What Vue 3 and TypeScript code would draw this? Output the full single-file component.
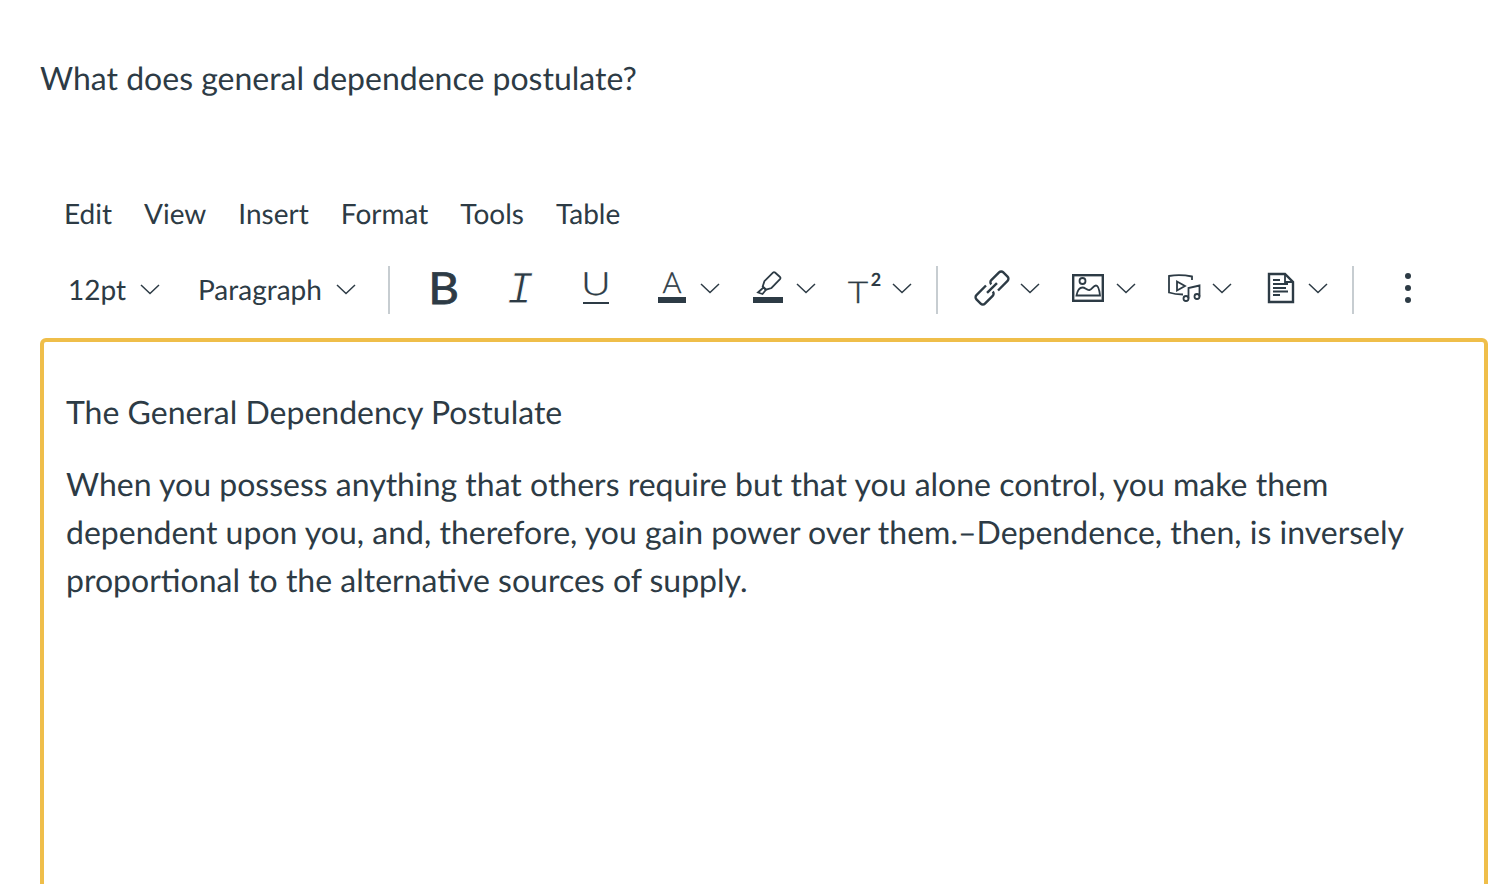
<script setup lang="ts">
const menus: string[] = ['Edit', 'View', 'Insert', 'Format', 'Tools', 'Table']
</script>

<template>
  <div class="page">
    <div class="question">What does general dependence postulate?</div>

    <div class="menubar">
      <span v-for="m in menus" :key="m">{{ m }}</span>
    </div>

    <div class="toolbar">
      <div class="select select-size">
        <span>12pt</span>
        <svg class="caret" width="20" height="10" viewBox="0 0 20 10"><path d="M1 1L10 9.5L19 1" /></svg>
      </div>
      <div class="select select-block">
        <span>Paragraph</span>
        <svg class="caret" width="20" height="10" viewBox="0 0 20 10"><path d="M1 1L10 9.5L19 1" /></svg>
      </div>
      <i class="sep sep-one"></i>

      <div class="btn">
        <svg width="36" height="36" viewBox="0 0 36 36"><text transform="translate(17.5 34) scale(1.08 1)" text-anchor="middle" class="g-b">B</text></svg>
      </div>
      <div class="btn">
        <svg width="36" height="36" viewBox="0 0 36 36"><text x="18" y="33" text-anchor="middle" class="g-i">I</text></svg>
      </div>
      <div class="btn">
        <svg width="36" height="36" viewBox="0 0 36 36">
          <text transform="translate(18 25) scale(1.28 1)" text-anchor="middle" class="g-u">U</text>
          <rect x="5" y="32" width="26" height="2" class="fill" />
        </svg>
      </div>

      <div class="split split-first">
        <div class="cell">
          <svg width="36" height="36" viewBox="0 0 36 36">
            <text x="18" y="23" text-anchor="middle" class="g-a">A</text>
            <rect x="4" y="27" width="28" height="6" class="fill" />
          </svg>
        </div>
        <svg class="caret" width="20" height="10" viewBox="0 0 20 10"><path d="M1 1L10 9.5L19 1" /></svg>
      </div>
      <div class="split">
        <div class="cell">
          <svg width="36" height="36" viewBox="0 0 36 36">
            <g transform="translate(3 2)" class="line">
              <path d="M22 0.5L27 5C27.6 5.7 27.6 6.5 27 7.2L18.5 16L13 17.7L9.7 14.5L11.4 9.2L20 0.6C20.6 0 21.4 0 22 0.5Z" />
              <path d="M10.5 15.5L5 20.5L9.5 22L13 17.7Z" />
            </g>
            <rect x="3" y="27" width="30" height="6" class="fill" />
          </svg>
        </div>
        <svg class="caret" width="20" height="10" viewBox="0 0 20 10"><path d="M1 1L10 9.5L19 1" /></svg>
      </div>
      <div class="split">
        <div class="cell">
          <svg width="36" height="36" viewBox="0 0 36 36">
            <text transform="translate(12 33) scale(1.18 1)" text-anchor="middle" class="g-t">T</text>
            <text x="30" y="16" text-anchor="middle" class="g-two">2</text>
          </svg>
        </div>
        <svg class="caret" width="20" height="10" viewBox="0 0 20 10"><path d="M1 1L10 9.5L19 1" /></svg>
      </div>
      <i class="sep"></i>

      <div class="split split-insert">
        <div class="cell">
          <svg width="36" height="36" viewBox="0 0 36 36">
            <g transform="translate(18 18) rotate(-45)" class="line thick">
              <path d="M-2.5 -6H-16a3 3 0 0 0 -3 3V3a3 3 0 0 0 3 3H-5a3 3 0 0 0 3 -3" />
              <path d="M2.5 6H16a3 3 0 0 0 3 -3V-3a3 3 0 0 0 -3 -3H5a3 3 0 0 0 -3 3" />
              <path d="M-7 0H7" />
            </g>
          </svg>
        </div>
        <svg class="caret" width="20" height="10" viewBox="0 0 20 10"><path d="M1 1L10 9.5L19 1" /></svg>
      </div>
      <div class="split">
        <div class="cell">
          <svg width="36" height="36" viewBox="0 0 36 36">
            <g transform="translate(2 4)" class="line">
              <rect x="1.2" y="1.2" width="29.6" height="25.6" class="thick" />
              <circle cx="10.5" cy="7" r="3" />
              <path d="M4.5 21.5C5.5 16 7.5 13.5 10.5 13.5C13.5 13.5 14.5 16.5 17.5 16C20.5 15.5 21 11.5 24 11.5C26.5 11.5 27.5 17 28 21.5Z" />
            </g>
          </svg>
        </div>
        <svg class="caret" width="20" height="10" viewBox="0 0 20 10"><path d="M1 1L10 9.5L19 1" /></svg>
      </div>
      <div class="split">
        <div class="cell">
          <svg width="36" height="36" viewBox="0 0 36 36">
            <g transform="translate(0 3)" class="line">
              <path d="M26 7V3.5Q14 1 3 3V19.5Q9 21.5 17 21.5" />
              <path d="M11 8.5L19 13L11 17.5Z" />
              <circle cx="20" cy="25.5" r="2.5" />
              <circle cx="31" cy="23.5" r="2.5" />
              <path d="M22.5 25.5V15L33.5 12.5V23.5" />
            </g>
          </svg>
        </div>
        <svg class="caret" width="20" height="10" viewBox="0 0 20 10"><path d="M1 1L10 9.5L19 1" /></svg>
      </div>
      <div class="split">
        <div class="cell">
          <svg width="36" height="36" viewBox="0 0 36 36">
            <g transform="translate(5 2)" class="line">
              <path d="M2 2H18L26 10V30H2Z" class="thick" />
              <path d="M18 2V10H26" />
              <path d="M6 8H13M6 12H21M6 16H19M6 19.5H21M6 23H13" />
            </g>
          </svg>
        </div>
        <svg class="caret" width="20" height="10" viewBox="0 0 20 10"><path d="M1 1L10 9.5L19 1" /></svg>
      </div>
      <i class="sep"></i>

      <div class="btn btn-more">
        <svg width="36" height="36" viewBox="0 0 36 36">
          <circle cx="18" cy="6" r="3" class="fill" />
          <circle cx="18" cy="18" r="3" class="fill" />
          <circle cx="18" cy="30" r="3" class="fill" />
        </svg>
      </div>
    </div>

    <div class="editor">
      <p>The General Dependency Postulate</p>
      <p>When you possess anything that others require but that you alone control, you make them dependent upon you, and, therefore, you gain power over them.–Dependence, then, is inversely proportional to the alternative sources of supply.</p>
    </div>
  </div>
</template>

<style scoped>
.page {
  height: 884px;
  overflow: hidden;
  box-sizing: border-box;
  padding: 54px 20px 0 40px;
  background: #fff;
  color: #2d3b45;
  font-family: Lato, "Open Sans", sans-serif;
  text-rendering: geometricPrecision;
}
.question {
  font-size: 32px;
  line-height: 48px;
}
.menubar {
  display: flex;
  gap: 32px;
  margin-top: 91px;
  padding-left: 24px;
  font-size: 28px;
  line-height: 40px;
}
.toolbar {
  display: flex;
  align-items: center;
  height: 48px;
  margin-top: 33px;
  padding-left: 28px;
}
.select {
  display: flex;
  align-items: center;
  gap: 14px;
  font-size: 28px;
  line-height: 46px;
}
.select .caret {
  margin-bottom: 2px;
}
.select > span {
  margin-bottom: 2px;
}
.select-size {
  width: 130px;
}
.select-block {
  width: 190px;
}
.sep {
  flex: none;
  width: 2px;
  height: 48px;
  background: #c7cdd1;
}
.sep-one {
  margin-right: 16px;
}
.btn {
  flex: none;
  display: flex;
  justify-content: center;
  width: 76px;
  height: 36px;
  margin-bottom: 4px;
}
.btn-more {
  margin-left: 16px;
}
.split {
  flex: none;
  display: flex;
  align-items: center;
  width: 96px;
  height: 36px;
  margin-bottom: 4px;
}
.split-first {
  margin-left: 14px;
}
.split-insert {
  margin-left: 30px;
}
.cell {
  display: flex;
  justify-content: center;
  width: 48px;
  height: 36px;
  margin-right: 4px;
}
svg {
  display: block;
  overflow: visible;
}
.caret path {
  fill: none;
  stroke: #2d3b45;
  stroke-width: 1.5;
}
.fill {
  fill: #2d3b45;
}
.line,
.line * {
  fill: none;
  stroke: #2d3b45;
  stroke-width: 1.8;
}
.line .thick,
.line.thick * {
  stroke-width: 2.4;
}
text {
  fill: #2d3b45;
  font-family: Lato, sans-serif;
}
.g-b {
  font-size: 44px;
  font-weight: 400;
  stroke: #2d3b45;
  stroke-width: 0.8;
}
.g-i {
  font-family: "Liberation Mono", monospace;
  font-style: italic;
  font-size: 46px;
  stroke: #fff;
  stroke-width: 1;
}
.g-u {
  font-size: 32px;
  font-weight: 300;
  stroke: #2d3b45;
  stroke-width: 0.3;
}
.g-a {
  font-size: 29px;
  font-weight: 300;
  stroke: #2d3b45;
  stroke-width: 0.4;
}
.g-t {
  font-size: 30px;
  font-weight: 300;
  stroke: #2d3b45;
  stroke-width: 0.3;
}
.g-two {
  font-size: 18px;
  font-weight: 700;
}
.editor {
  box-sizing: border-box;
  height: 640px;
  margin-top: 24px;
  padding: 46px 22px 0;
  border: 4px solid #efbe4a;
  border-radius: 6px;
  font-size: 32px;
  line-height: 48px;
}
.editor p {
  margin: 0 0 24px;
}
</style>

<style>
html,
body {
  margin: 0;
  overflow: hidden;
  background: #fff;
}
</style>
